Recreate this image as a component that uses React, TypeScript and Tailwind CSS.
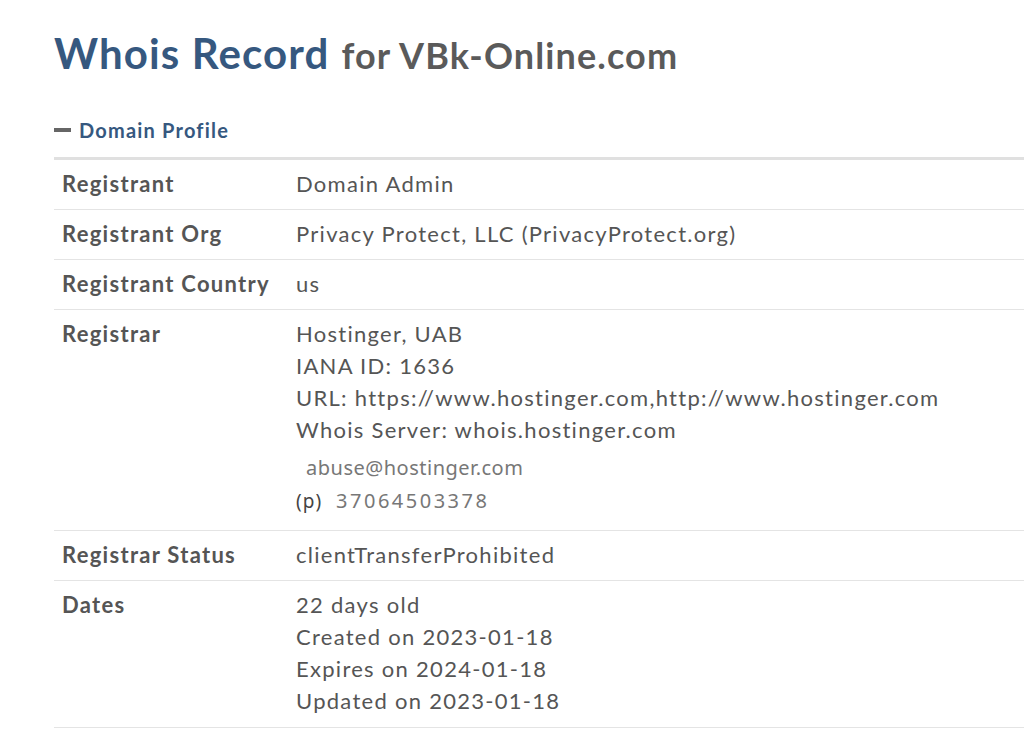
import React from "react";

const rows: { label: string; lines: React.ReactNode[] }[] = [
  { label: "Registrant", lines: ["Domain Admin"] },
  { label: "Registrant Org", lines: ["Privacy Protect, LLC (PrivacyProtect.org)"] },
  { label: "Registrant Country", lines: ["us"] },
];

const Row = ({ label, children, pb = "pb-[9px]" }: { label: string; children: React.ReactNode; pb?: string }) => (
  <div className={`flex border-b border-[#e4e4e4] pt-[8px] ${pb}`}>
    <div className="w-[242px] shrink-0 pl-2 font-bold text-[#555] leading-[32px]">{label}</div>
    <div className="flex-1 text-[#555] leading-[32px]">{children}</div>
  </div>
);

export default function App() {
  return (
    <div className="min-h-[734px] bg-white pl-[54px] pt-[26px] tracking-[0.08em]" style={{ fontFamily: "Lato, 'Open Sans', sans-serif" }}>
      <h1 className="flex items-baseline gap-[12px] leading-[54px] tracking-[0.07em]">
        <span className="text-[42px] font-bold text-[#36587f]">Whois Record</span>
        <span className="text-[36px] font-bold text-[#5a5a5a]">for VBk-Online.com</span>
      </h1>

      <div className="mt-[33px] flex items-center gap-[8px] pb-[12px]">
        <span className="inline-block h-[4px] w-[17px] bg-[#666]" />
        <span className="text-[20px] font-bold tracking-[0.06em] text-[#36587f]">Domain Profile</span>
      </div>

      <div className="border-t-[3px] border-[#e0e0e0] text-[22px]">
        {rows.map((r) => (
          <Row key={r.label} label={r.label}>
            {r.lines.map((l, i) => (
              <div key={i}>{l}</div>
            ))}
          </Row>
        ))}
        <Row label="Registrar" pb="pb-[12px]">
          <div>Hostinger, UAB</div>
          <div>IANA ID: 1636</div>
          <div>URL: https://www.hostinger.com,http://www.hostinger.com</div>
          <div>Whois Server: whois.hostinger.com</div>
          <div className="mt-[6px] pl-[10px] text-[20px] tracking-[0.5px] text-[#777]" style={{ fontFamily: "'Noto Sans', sans-serif" }}>
            abuse@hostinger.com
          </div>
          <div className="flex items-baseline gap-[14px] leading-[33px]" style={{ fontFamily: "'Noto Sans', sans-serif" }}>
            <span className="text-[19px] tracking-[1px] text-[#444]">(p)</span>
            <span className="text-[20px] tracking-[2.5px] text-[#777]">37064503378</span>
          </div>
        </Row>
        <Row label="Registrar Status">
          <div>clientTransferProhibited</div>
        </Row>
        <Row label="Dates" pb="pb-[10px]">
          <div>22 days old</div>
          <div>Created on 2023-01-18</div>
          <div>Expires on 2024-01-18</div>
          <div>Updated on 2023-01-18</div>
        </Row>
      </div>
    </div>
  );
}
